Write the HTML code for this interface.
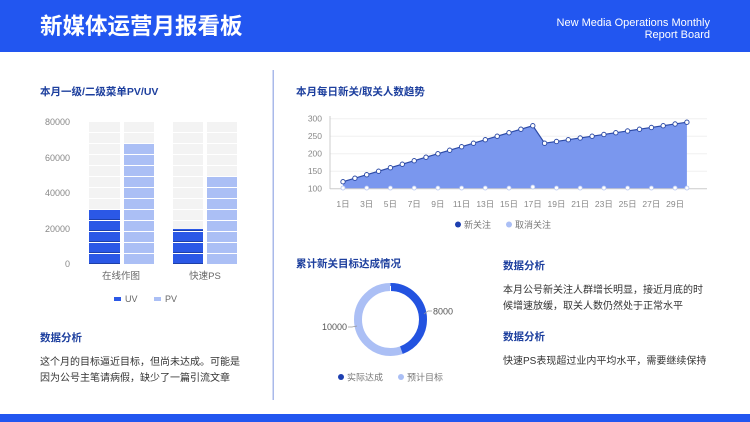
<!DOCTYPE html>
<html><head><meta charset="utf-8"><style>
html,body{margin:0;padding:0;background:#fff;}
svg{display:block;font-family:"Liberation Sans","Noto Sans CJK SC",sans-serif;}
</style></head><body>
<svg width="750" height="422" viewBox="0 0 750 422" xmlns="http://www.w3.org/2000/svg">
<defs>
<pattern id="pg" patternUnits="userSpaceOnUse" x="0" y="1" width="750" height="11"><rect x="0" y="0" width="750" height="10" fill="#f3f3f3"/></pattern>
<pattern id="pd" patternUnits="userSpaceOnUse" x="0" y="1" width="750" height="11"><rect x="0" y="0" width="750" height="10" fill="#2b58e6"/><rect x="0" y="9" width="750" height="1" fill="#1d3fa8"/></pattern>
<pattern id="pl" patternUnits="userSpaceOnUse" x="0" y="1" width="750" height="11"><rect x="0" y="0" width="750" height="10" fill="#abbff5"/></pattern>
</defs>
<rect x="0" y="0" width="750" height="52" fill="#2256f0"/>
<text x="40" y="34" font-size="22.5" font-weight="bold" fill="#fff">新媒体运营月报看板</text>
<text x="710" y="26" font-size="11" fill="#fff" text-anchor="end">New Media Operations Monthly</text>
<text x="710" y="38" font-size="11" fill="#fff" text-anchor="end">Report Board</text>

<rect x="272.5" y="70" width="1.5" height="330" fill="#a9b9ea"/>
<rect x="0" y="414" width="750" height="8" fill="#2256f0"/>

<g font-size="10.5" font-weight="bold" fill="#1d3f9e">
<text x="40" y="95">本月一级/二级菜单PV/UV</text>
<text x="296" y="95">本月每日新关/取关人数趋势</text>
<text x="296" y="267">累计新关目标达成情况</text>
<text x="40" y="341">数据分析</text>
<text x="503" y="269">数据分析</text>
<text x="503" y="340">数据分析</text>
</g>
<g font-size="10" fill="#333">
<text x="40" y="365">这个月的目标逼近目标，但尚未达成。可能是</text>
<text x="40" y="381">因为公号主笔请病假，缺少了一篇引流文章</text>
<text x="503" y="293">本月公号新关注人群增长明显，接近月底的时</text>
<text x="503" y="309">候增速放缓，取关人数仍然处于正常水平</text>
<text x="503" y="364">快速PS表现超过业内平均水平，需要继续保持</text>
</g>

<!-- bar chart -->
<g font-size="9" fill="#888" text-anchor="end">
<text x="70" y="125">80000</text><text x="70" y="161">60000</text><text x="70" y="196">40000</text><text x="70" y="232">20000</text><text x="70" y="267">0</text>
</g>
<rect x="89" y="122" width="31" height="142" fill="url(#pg)"/>
<rect x="124" y="122" width="30" height="142" fill="url(#pg)"/>
<rect x="173" y="122" width="30" height="142" fill="url(#pg)"/>
<rect x="207" y="122" width="30" height="142" fill="url(#pg)"/>
<rect x="89" y="210" width="31" height="54" fill="url(#pd)"/>
<rect x="124" y="144" width="30" height="120" fill="url(#pl)"/>
<rect x="173" y="229" width="30" height="35" fill="url(#pd)"/>
<rect x="207" y="177" width="30" height="87" fill="url(#pl)"/>
<g font-size="9.5" fill="#666" text-anchor="middle"><text x="121" y="279">在线作图</text><text x="205" y="279">快速PS</text></g>
<rect x="114" y="297" width="7" height="4" fill="#2b58e6"/><text x="125" y="302" font-size="9" fill="#666">UV</text>
<rect x="154" y="297" width="7" height="4" fill="#abbff5"/><text x="165" y="302" font-size="9" fill="#666">PV</text>

<!-- line chart -->
<g font-size="8.5" fill="#888" text-anchor="end">
<text x="322" y="121.7">300</text><text x="322" y="139">250</text><text x="322" y="156.7">200</text><text x="322" y="174">150</text><text x="322" y="191.7">100</text>
</g>
<g stroke="#f0f0f0" stroke-width="1">
<line x1="330" y1="118.7" x2="707" y2="118.7"/><line x1="330" y1="136.2" x2="707" y2="136.2"/><line x1="330" y1="153.7" x2="707" y2="153.7"/><line x1="330" y1="171.2" x2="707" y2="171.2"/>
</g>
<line x1="330" y1="116" x2="330" y2="189" stroke="#ccc"/>
<polygon fill="#7a97ee" points="343,188.7 343,181.7 354.9,178.2 366.7,174.7 378.6,171.2 390.4,167.7 402.3,164.2 414.2,160.7 426,157.2 437.9,153.7 449.7,150.2 461.6,146.7 473.5,143.2 485.3,139.7 497.2,136.2 509,132.7 520.9,129.2 532.8,125.7 544.6,143.2 556.5,141.45 568.3,139.7 580.2,137.95 592.1,136.2 603.9,134.45 615.8,132.7 627.6,130.95 639.5,129.2 651.4,127.45 663.2,125.7 675.1,123.95 686.9,122.2 686.9,188.7"/>
<polyline fill="none" stroke="#2c4aa6" stroke-width="1.2" points="343,181.7 354.9,178.2 366.7,174.7 378.6,171.2 390.4,167.7 402.3,164.2 414.2,160.7 426,157.2 437.9,153.7 449.7,150.2 461.6,146.7 473.5,143.2 485.3,139.7 497.2,136.2 509,132.7 520.9,129.2 532.8,125.7 544.6,143.2 556.5,141.45 568.3,139.7 580.2,137.95 592.1,136.2 603.9,134.45 615.8,132.7 627.6,130.95 639.5,129.2 651.4,127.45 663.2,125.7 675.1,123.95 686.9,122.2"/>
<line x1="330" y1="188.7" x2="707" y2="188.7" stroke="#ccc"/>
<g fill="#fff" stroke="#2c4aa6" stroke-width="0.9">
<circle cx="343" cy="181.7" r="2.2"/><circle cx="354.9" cy="178.2" r="2.2"/><circle cx="366.7" cy="174.7" r="2.2"/><circle cx="378.6" cy="171.2" r="2.2"/><circle cx="390.4" cy="167.7" r="2.2"/><circle cx="402.3" cy="164.2" r="2.2"/><circle cx="414.2" cy="160.7" r="2.2"/><circle cx="426" cy="157.2" r="2.2"/><circle cx="437.9" cy="153.7" r="2.2"/><circle cx="449.7" cy="150.2" r="2.2"/><circle cx="461.6" cy="146.7" r="2.2"/><circle cx="473.5" cy="143.2" r="2.2"/><circle cx="485.3" cy="139.7" r="2.2"/><circle cx="497.2" cy="136.2" r="2.2"/><circle cx="509" cy="132.7" r="2.2"/><circle cx="520.9" cy="129.2" r="2.2"/><circle cx="532.8" cy="125.7" r="2.2"/><circle cx="544.6" cy="143.2" r="2.2"/><circle cx="556.5" cy="141.45" r="2.2"/><circle cx="568.3" cy="139.7" r="2.2"/><circle cx="580.2" cy="137.95" r="2.2"/><circle cx="592.1" cy="136.2" r="2.2"/><circle cx="603.9" cy="134.45" r="2.2"/><circle cx="615.8" cy="132.7" r="2.2"/><circle cx="627.6" cy="130.95" r="2.2"/><circle cx="639.5" cy="129.2" r="2.2"/><circle cx="651.4" cy="127.45" r="2.2"/><circle cx="663.2" cy="125.7" r="2.2"/><circle cx="675.1" cy="123.95" r="2.2"/><circle cx="686.9" cy="122.2" r="2.2"/>
</g>
<g fill="#fff" stroke="#b5c5f0" stroke-width="0.8">
<circle cx="343" cy="188" r="2"/><circle cx="366.7" cy="188" r="2"/><circle cx="390.4" cy="188" r="2"/><circle cx="414.2" cy="188" r="2"/><circle cx="437.9" cy="188" r="2"/><circle cx="461.6" cy="188" r="2"/><circle cx="485.3" cy="188" r="2"/><circle cx="509" cy="188" r="2"/><circle cx="532.8" cy="187" r="2"/><circle cx="556.5" cy="188" r="2"/><circle cx="580.2" cy="188" r="2"/><circle cx="603.9" cy="188" r="2"/><circle cx="627.6" cy="188" r="2"/><circle cx="651.4" cy="188" r="2"/><circle cx="675.1" cy="188" r="2"/><circle cx="686.9" cy="188" r="2"/>
</g>
<g font-size="8.5" fill="#888" text-anchor="middle">
<text x="343" y="207">1日</text><text x="366.7" y="207">3日</text><text x="390.4" y="207">5日</text><text x="414.2" y="207">7日</text><text x="437.9" y="207">9日</text><text x="461.6" y="207">11日</text><text x="485.3" y="207">13日</text><text x="509" y="207">15日</text><text x="532.8" y="207">17日</text><text x="556.5" y="207">19日</text><text x="580.2" y="207">21日</text><text x="603.9" y="207">23日</text><text x="627.6" y="207">25日</text><text x="651.4" y="207">27日</text><text x="675.1" y="207">29日</text>
</g>
<circle cx="458" cy="224.5" r="3" fill="#1d3fb0"/><text x="464" y="228" font-size="9" fill="#777">新关注</text>
<circle cx="509" cy="224.5" r="3" fill="#abbff5"/><text x="515" y="228" font-size="9" fill="#777">取消关注</text>

<!-- donut -->
<circle cx="390.5" cy="319.5" r="32.5" fill="none" stroke="#abbff5" stroke-width="8"/>
<circle cx="390.5" cy="319.5" r="32.5" fill="none" stroke="#2353e0" stroke-width="8" stroke-dasharray="90.8 204.2" transform="rotate(-90 390.5 319.5)"/>
<line x1="390.5" y1="286" x2="390.5" y2="292" stroke="#fff" stroke-width="1"/>
<polyline points="424,314 428,311 432,311" fill="none" stroke="#999" stroke-width="0.7"/>
<text x="433" y="314.5" font-size="9" fill="#555">8000</text>
<polyline points="357,326 352,327 348,327" fill="none" stroke="#999" stroke-width="0.7"/>
<text x="347" y="330" font-size="9" fill="#555" text-anchor="end">10000</text>
<circle cx="341" cy="377" r="3" fill="#1d3fb0"/><text x="347" y="380.5" font-size="9" fill="#777">实际达成</text>
<circle cx="401" cy="377" r="3" fill="#abbff5"/><text x="407" y="380.5" font-size="9" fill="#777">预计目标</text>
</svg>
</body></html>
